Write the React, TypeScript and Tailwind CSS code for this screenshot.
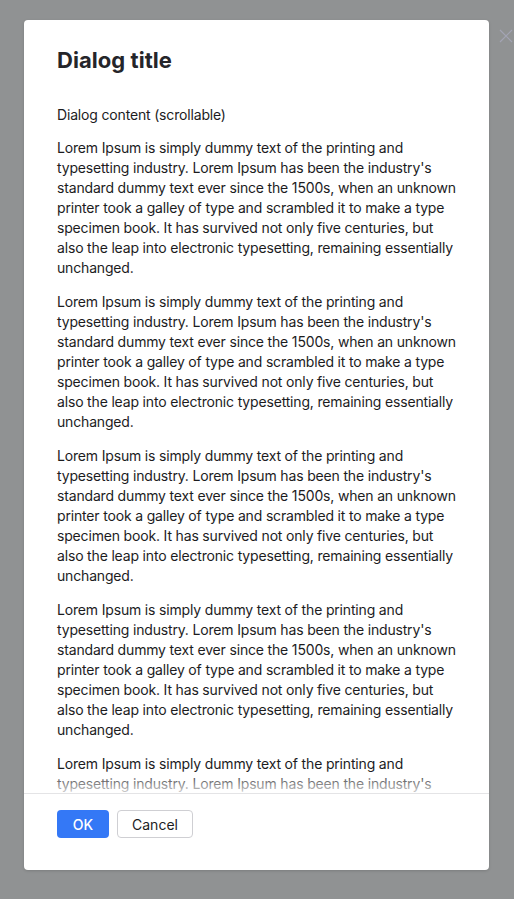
import React from "react";

const LOREM =
  "Lorem Ipsum is simply dummy text of the printing and typesetting industry. Lorem Ipsum has been the industry's standard dummy text ever since the 1500s, when an unknown printer took a galley of type and scrambled it to make a type specimen book. It has survived not only five centuries, but also the leap into electronic typesetting, remaining essentially unchanged.";

export default function App() {
  return (
    <div
      className="relative w-[514px] h-[899px] bg-[#909293] overflow-hidden"
      style={{ fontFamily: "Inter, 'Noto Sans', sans-serif" }}
    >
      <button className="absolute left-[499px] top-[29px] w-[14px] h-[14px] text-[#a3a4b4]">
        <svg width="14" height="14" viewBox="0 0 14 14" fill="none" stroke="currentColor" strokeWidth="1.2">
          <path d="M1 1L13 13M13 1L1 13" />
        </svg>
      </button>
      <div className="absolute left-[24px] top-[20px] w-[465px] h-[850px] bg-white rounded-[4px] shadow-[0_1px_3px_rgba(0,0,0,0.15)] flex flex-col">
        <div className="px-[33px] pt-[25px] pb-[27px]">
          <h1 className="text-[22px] leading-[30px] font-bold text-[#25252a] tracking-[0.05px]">Dialog title</h1>
        </div>
        <div className="relative flex-1 min-h-0 overflow-hidden">
          <div className="pl-[33px] pr-[30px] pt-[3px] text-[14px] leading-[20px] text-[#1c1c1e] tracking-[-0.17px]">
            <p className="mb-[13px]">Dialog content (scrollable)</p>
            {Array.from({ length: 7 }).map((_, i) => (
              <p key={i} className="mb-[14px]">
                {LOREM}
              </p>
            ))}
          </div>
          <div className="absolute left-0 right-0 bottom-0 h-[22px] bg-gradient-to-b from-white/0 to-white/80" />
        </div>
        <div className="border-t border-[#e4e4e6] px-[33px] pt-[16px] pb-[32px] flex gap-[8px]">
          <button className="h-[28px] w-[52px] rounded-[4px] bg-[#3478f6] text-white text-[14px] font-medium">
            OK
          </button>
          <button className="h-[28px] w-[76px] rounded-[4px] bg-white border border-[#cfcfd3] text-[#1c1c1e] text-[14px]">
            Cancel
          </button>
        </div>
      </div>
    </div>
  );
}
